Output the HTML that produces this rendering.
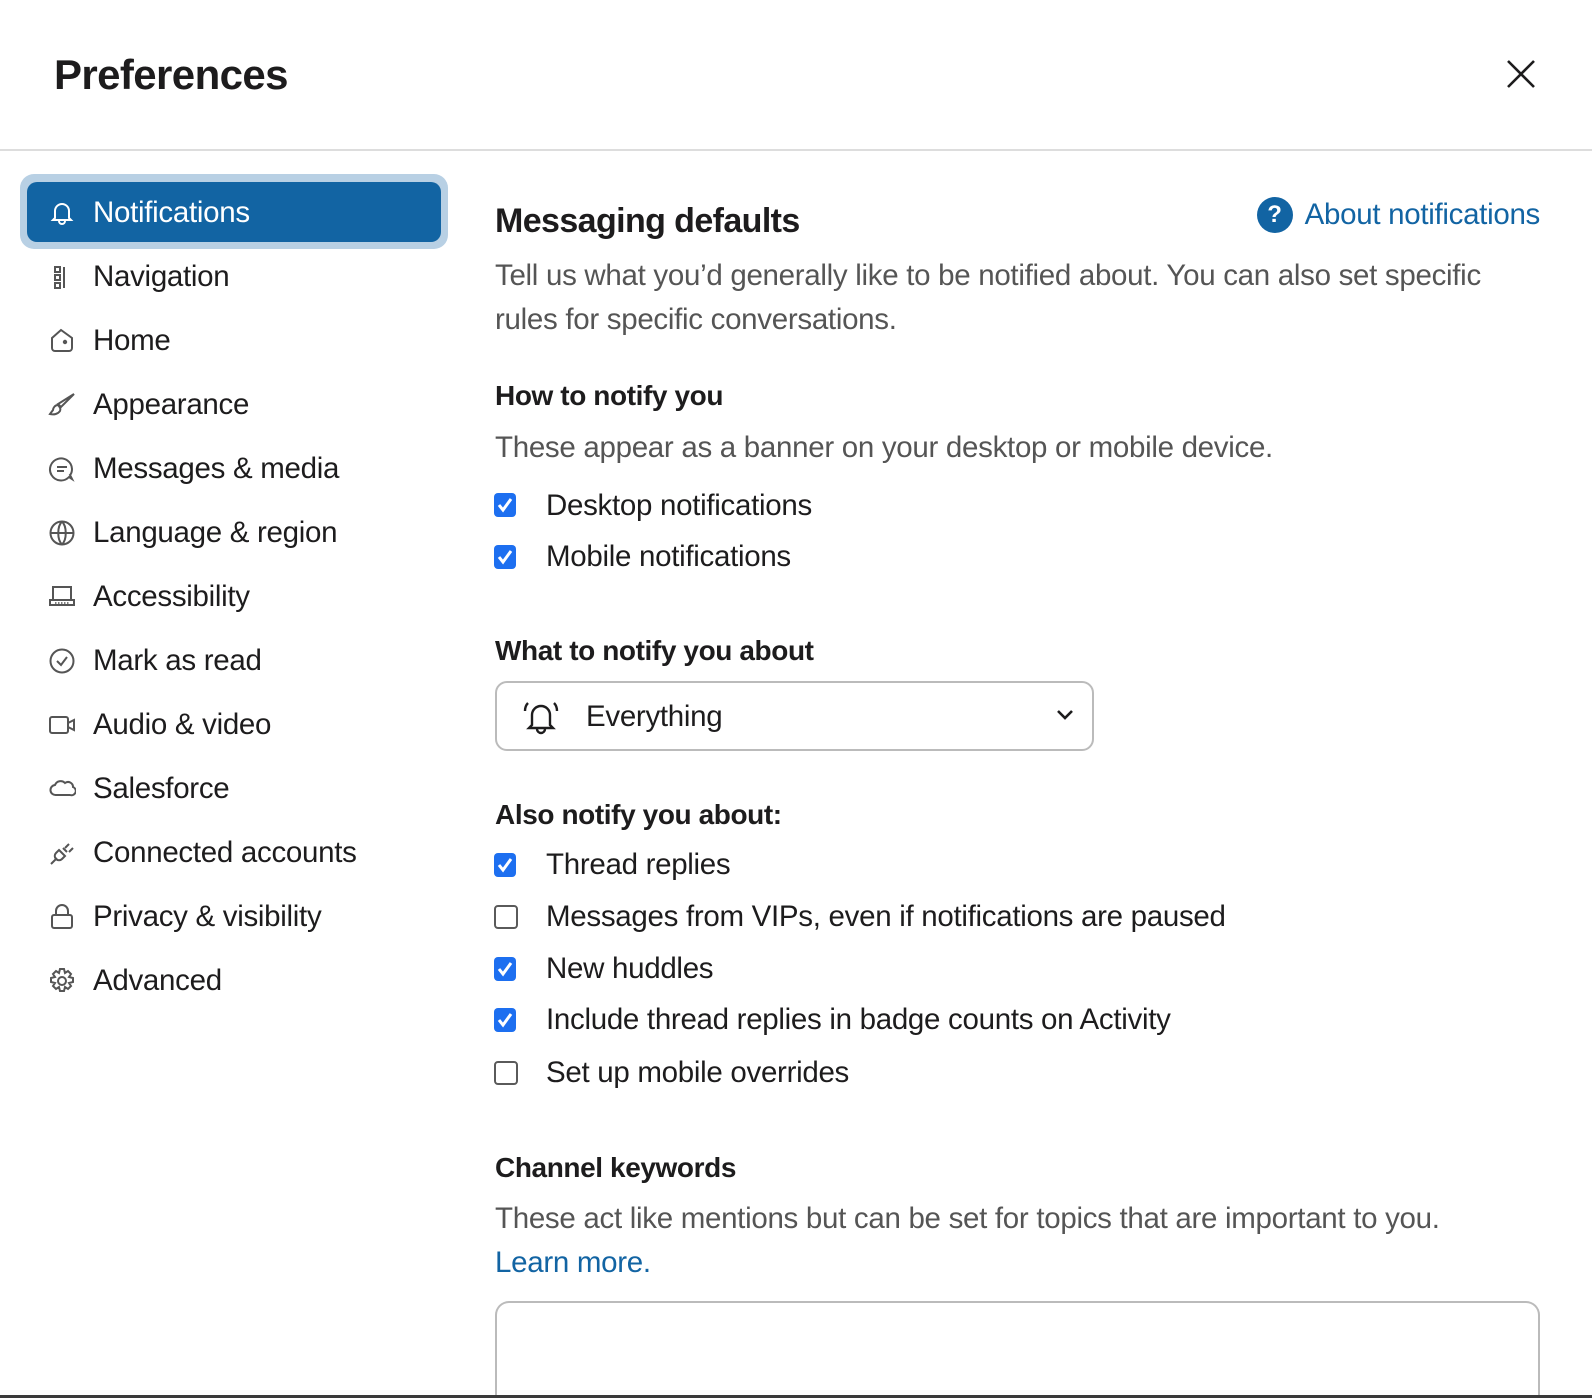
<!DOCTYPE html>
<html style="overflow:hidden;height:1398px"><head><meta charset="utf-8"><style>
*{margin:0;padding:0;box-sizing:border-box}
body{width:1592px;height:1398px;background:#fff;position:relative;overflow:hidden;font-family:"Liberation Sans",sans-serif;color:#1d1c1d}
.a{position:absolute;white-space:nowrap;line-height:40px}
.t{font-size:29.5px;letter-spacing:-0.3px}
.g{color:#555}
.b{font-weight:bold;font-size:28px;letter-spacing:-0.4px}
.ic{position:absolute;width:28px;height:28px}
.cb{position:absolute;left:494px;width:22px;height:24px;border-radius:4px;background:#1d6ff0}
.cb svg{position:absolute;left:3px;top:4px}
.ub{position:absolute;left:494px;width:24px;height:24px;border-radius:4px;border:2px solid #5a5a5a;background:#fff}
</style></head><body>
<div class="a" style="left:54px;top:55px;font-size:42px;font-weight:bold;letter-spacing:-0.6px">Preferences</div>
<svg style="position:absolute;left:1506px;top:59px" width="30" height="30" viewBox="0 0 30 30"><path d="M2 2L28 28M28 2L2 28" stroke="#1d1c1d" stroke-width="2.6" fill="none"/></svg>
<div style="position:absolute;left:0;top:149px;width:1592px;height:2px;background:#ddd"></div>

<div style="position:absolute;left:20px;top:174px;width:428px;height:75px;border-radius:14px;background:#b8d0e4"></div>
<div style="position:absolute;left:27px;top:182px;width:414px;height:60px;border-radius:10px;background:#1264a3"></div>
<svg class="ic" style="left:48px;top:199px" viewBox="0 0 28 28" fill="none" stroke="#fff" stroke-width="2"><path d="M7 19V12a7 7 0 0 1 14 0v7l2 2H5z M11 22a3 3 0 0 0 6 0"/></svg>
<div class="a t" style="left:93px;top:193px;color:#fff">Notifications</div>

<svg class="ic" style="left:48px;top:263px" viewBox="0 0 28 28" fill="none" stroke="#555" stroke-width="2"><rect x="7" y="4" width="5" height="5"/><rect x="7" y="12" width="5" height="5"/><rect x="7" y="20" width="5" height="5"/><path d="M16 4v21"/></svg>
<div class="a t" style="left:93px;top:257px">Navigation</div>
<svg class="ic" style="left:48px;top:327px" viewBox="0 0 28 28" fill="none" stroke="#555" stroke-width="2"><path d="M4 11l9-8 11 8v10a3 3 0 0 1-3 3H7a3 3 0 0 1-3-3z"/><circle cx="17" cy="15" r="1.2" fill="#555"/></svg>
<div class="a t" style="left:93px;top:321px">Home</div>
<svg class="ic" style="left:48px;top:391px" viewBox="0 0 28 28" fill="none" stroke="#555" stroke-width="2"><path d="M26 3L13 16l-3-3zM10 14c-3 0-5 3-5 5l-3 4c4 1 8 0 10-3 1-2 0-4-2-6"/></svg>
<div class="a t" style="left:93px;top:385px">Appearance</div>
<svg class="ic" style="left:48px;top:455px" viewBox="0 0 28 28" fill="none" stroke="#555" stroke-width="2"><path d="M24 24l-3-2a11 11 0 1 1 3-8c0 3-1 5-2 6z"/><path d="M9 12h10M9 16h7"/></svg>
<div class="a t" style="left:93px;top:449px">Messages &amp; media</div>
<svg class="ic" style="left:48px;top:519px" viewBox="0 0 28 28" fill="none" stroke="#555" stroke-width="2"><circle cx="14" cy="14" r="11.5"/><path d="M2.5 14h23M14 2.5c-5 5-5 18 0 23M14 2.5c5 5 5 18 0 23"/></svg>
<div class="a t" style="left:93px;top:513px">Language &amp; region</div>
<svg class="ic" style="left:48px;top:583px" viewBox="0 0 28 28" fill="none" stroke="#555" stroke-width="2"><path d="M5 17V4h18v13M2 17h24v5H2z"/><path d="M7 20h14" stroke-dasharray="1.5 1.5" stroke-width="1.5"/></svg>
<div class="a t" style="left:93px;top:577px">Accessibility</div>
<svg class="ic" style="left:48px;top:647px" viewBox="0 0 28 28" fill="none" stroke="#555" stroke-width="2"><circle cx="14" cy="14" r="11.5"/><path d="M9 14l4 4 6-8"/></svg>
<div class="a t" style="left:93px;top:641px">Mark as read</div>
<svg class="ic" style="left:48px;top:711px" viewBox="0 0 28 28" fill="none" stroke="#555" stroke-width="2"><rect x="2" y="6" width="18" height="16" rx="2"/><path d="M20 12l6-3v10l-6-3"/></svg>
<div class="a t" style="left:93px;top:705px">Audio &amp; video</div>
<svg class="ic" style="left:48px;top:775px" viewBox="0 0 28 28" fill="none" stroke="#555" stroke-width="2"><path d="M8 20a5 5 0 0 1-1-10 6 6 0 0 1 10-2 5 5 0 0 1 8 4 4 4 0 0 1-3 8z"/></svg>
<div class="a t" style="left:93px;top:769px">Salesforce</div>
<svg class="ic" style="left:48px;top:839px" viewBox="0 0 28 28" fill="none" stroke="#555" stroke-width="2"><path d="M3 25l6-6M11 11l6 6-3 3a4 4 0 0 1-6-6zM17 9l4-4M21 13l4-4M15 9l4 4"/></svg>
<div class="a t" style="left:93px;top:833px">Connected accounts</div>
<svg class="ic" style="left:48px;top:903px" viewBox="0 0 28 28" fill="none" stroke="#555" stroke-width="2"><rect x="4" y="12" width="20" height="13" rx="2"/><path d="M8 12V8a6 6 0 0 1 12 0v4"/></svg>
<div class="a t" style="left:93px;top:897px">Privacy &amp; visibility</div>
<svg class="ic" style="left:48px;top:967px" viewBox="0 0 28 28" fill="none" stroke="#555" stroke-width="2"><circle cx="14" cy="14" r="4"/><path d="M12 2h4l1 4 3-2 3 3-2 3 4 1v4l-4 1 2 3-3 3-3-2-1 4h-4l-1-4-3 2-3-3 2-3-4-1v-4l4-1-2-3 3-3 3 2z"/></svg>
<div class="a t" style="left:93px;top:961px">Advanced</div>

<div class="a" style="left:495px;top:201px;font-size:34px;font-weight:bold;letter-spacing:-0.6px">Messaging defaults</div>
<div style="position:absolute;right:52px;top:195px;display:flex;align-items:center;height:40px;white-space:nowrap">
<div style="width:36px;height:36px;border-radius:50%;background:#1264a3;color:#fff;font-weight:bold;font-size:24px;text-align:center;line-height:36px;margin-right:12px">?</div>
<div class="t" style="color:#1264a3;line-height:40px">About notifications</div></div>
<div class="a t g" style="left:495px;top:256px">Tell us what you’d generally like to be notified about. You can also set specific</div>
<div class="a t g" style="left:495px;top:300px">rules for specific conversations.</div>
<div class="a b" style="left:495px;top:376px">How to notify you</div>
<div class="a t g" style="left:495px;top:428px">These appear as a banner on your desktop or mobile device.</div>

<div class="cb" style="top:493px"><svg width="16" height="16" viewBox="0 0 16 16"><path d="M2 8l4 5 8-11" stroke="#fff" stroke-width="3" fill="none"/></svg></div>
<div class="a t" style="left:546px;top:486px">Desktop notifications</div>
<div class="cb" style="top:545px"><svg width="16" height="16" viewBox="0 0 16 16"><path d="M2 8l4 5 8-11" stroke="#fff" stroke-width="3" fill="none"/></svg></div>
<div class="a t" style="left:546px;top:537px">Mobile notifications</div>

<div class="a b" style="left:495px;top:631px">What to notify you about</div>
<div style="position:absolute;left:495px;top:681px;width:599px;height:70px;border:2px solid #bbb;border-radius:12px"></div>
<svg style="position:absolute;left:521px;top:699px" width="40" height="36" viewBox="0 0 40 36" fill="none" stroke="#1d1c1d" stroke-width="2.4"><path d="M11 26V16a9 9 0 0 1 18 0v10l3 3H8z M16 30a4 4 0 0 0 8 0 M7 4c-2 2-3 5-3 8 M33 4c2 2 3 5 3 8"/></svg>
<div class="a t" style="left:586px;top:697px">Everything</div>
<svg style="position:absolute;left:1055px;top:708px" width="20" height="14" viewBox="0 0 20 14"><path d="M3 3l7 7 7-7" stroke="#1d1c1d" stroke-width="2.6" fill="none"/></svg>

<div class="a b" style="left:495px;top:795px">Also notify you about:</div>
<div class="cb" style="top:853px"><svg width="16" height="16" viewBox="0 0 16 16"><path d="M2 8l4 5 8-11" stroke="#fff" stroke-width="3" fill="none"/></svg></div>
<div class="a t" style="left:546px;top:845px">Thread replies</div>
<div class="ub" style="top:905px"></div>
<div class="a t" style="left:546px;top:897px">Messages from VIPs, even if notifications are paused</div>
<div class="cb" style="top:957px"><svg width="16" height="16" viewBox="0 0 16 16"><path d="M2 8l4 5 8-11" stroke="#fff" stroke-width="3" fill="none"/></svg></div>
<div class="a t" style="left:546px;top:949px">New huddles</div>
<div class="cb" style="top:1008px"><svg width="16" height="16" viewBox="0 0 16 16"><path d="M2 8l4 5 8-11" stroke="#fff" stroke-width="3" fill="none"/></svg></div>
<div class="a t" style="left:546px;top:1000px">Include thread replies in badge counts on Activity</div>
<div class="ub" style="top:1061px"></div>
<div class="a t" style="left:546px;top:1053px">Set up mobile overrides</div>

<div class="a b" style="left:495px;top:1148px">Channel keywords</div>
<div class="a t g" style="left:495px;top:1199px">These act like mentions but can be set for topics that are important to you.</div>
<div class="a t" style="left:495px;top:1243px;color:#1264a3">Learn more.</div>
<div style="position:absolute;left:495px;top:1301px;width:1045px;height:94px;border:2px solid #bbb;border-bottom:none;border-radius:14px 14px 0 0"></div>
<div style="position:absolute;left:0;top:1395px;width:1592px;height:3px;background:#3a3a3a"></div>
</body></html>
